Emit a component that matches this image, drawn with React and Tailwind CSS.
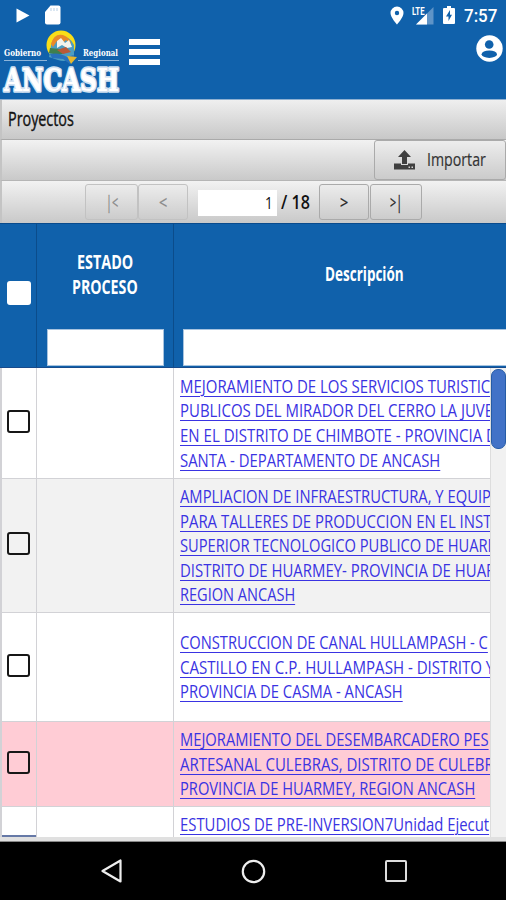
import React, { useLayoutEffect, useRef, useState } from 'react'

const rows = [
  {
    height: 'h-[111px]',
    bg: 'bg-white',
    lines: [
      ['MEJORAMIENTO DE LOS SERVICIOS TURISTIC', 310],
      ['PUBLICOS DEL MIRADOR DEL CERRO LA JUVE', 313],
      ['EN EL DISTRITO DE CHIMBOTE - PROVINCIA D', 317],
      ['SANTA - DEPARTAMENTO DE ANCASH', 260],
    ],
  },
  {
    height: 'h-[134px]',
    bg: 'bg-[#f2f2f2]',
    lines: [
      ['AMPLIACION DE INFRAESTRUCTURA, Y EQUIP', 311],
      ['PARA TALLERES DE PRODUCCION EN EL INST', 311],
      ['SUPERIOR TECNOLOGICO PUBLICO DE HUARM', 321],
      ['DISTRITO DE HUARMEY- PROVINCIA DE HUAR', 315],
      ['REGION ANCASH', 115],
    ],
  },
  {
    height: 'h-[109px]',
    bg: 'bg-white',
    lines: [
      ['CONSTRUCCION DE CANAL HULLAMPASH - C', 308],
      ['CASTILLO EN C.P. HULLAMPASH - DISTRITO Y', 314],
      ['PROVINCIA DE CASMA - ANCASH', 223],
    ],
  },
  {
    height: 'h-[85px]',
    bg: 'bg-[#ffccd5]',
    lines: [
      ['MEJORAMIENTO DEL DESEMBARCADERO PES', 309],
      ['ARTESANAL CULEBRAS, DISTRITO DE CULEBR', 314],
      ['PROVINCIA DE HUARMEY, REGION ANCASH', 295],
    ],
  },
]

// Condenses a line of text horizontally to the given width
const Narrow = ({ children, width, className = '' }) => {
  const ref = useRef(null)
  const [scale, setScale] = useState(1)

  useLayoutEffect(() => {
    setScale(width / ref.current.offsetWidth)
  }, [width, children])

  return (
    <span className="block shrink-0" style={{ width }}>
      <span
        ref={ref}
        className={`inline-block origin-left whitespace-nowrap align-top ${className}`}
        style={{ transform: `scaleX(${scale})` }}
      >
        {children}
      </span>
    </span>
  )
}

const Link = ({ text, width }) => (
  <a className="block h-[24.6px] text-[19px] leading-[24.6px] text-[#3a33e2]">
    <Narrow width={width} className="underline decoration-1 underline-offset-[3px]">{text}</Narrow>
  </a>
)

const StatusBar = () => (
  <div className="flex h-[30px] items-center justify-between pl-[16px] pr-[9px] text-white">
    <div className="flex items-center gap-[15px]">
      <svg className="h-[15px] w-[14px]" viewBox="0 0 14 15" fill="currentColor">
        <path d="M0.500 0.500L13.500 7.500L0.500 14.500Z" />
      </svg>
      <svg className="h-[20px] w-[16px]" viewBox="0 0 16 20" fill="currentColor">
        <path d="M5.500 0.500H13.500Q15.500 0.500 15.500 2.500V17.500Q15.500 19.500 13.500 19.500H2Q0 19.500 0 17.500V7Z" />
        <path d="M6 3V6M9 3V6M12 3V6" stroke="#c4d7ea" strokeWidth="1.200" />
      </svg>
    </div>
    <div className="flex items-center">
      <svg className="mr-[8px] h-[19px] w-[14px]" viewBox="0 0 14 19" fill="currentColor">
        <path fillRule="evenodd" d="M7 0.500A6.500 6.500 0 0 0 0.500 7C0.500 11.500 7 18.500 7 18.500S13.500 11.500 13.500 7A6.500 6.500 0 0 0 7 0.500ZM7 4.800A2.200 2.200 0 1 1 7 9.200A2.200 2.200 0 0 1 7 4.800Z" />
      </svg>
      <svg className="mr-[9px] h-[19px] w-[22px]" viewBox="0 0 22 19">
        <path d="M21.500 1V18.500H4Z" fill="#5f94c7" />
        <path d="M15 7.500V18.500H4Z" fill="#fff" />
        <text x="0" y="9" fill="#fff" fontFamily="Roboto, sans-serif" fontSize="10.500" fontWeight="700" textLength="12.500" lengthAdjust="spacingAndGlyphs">LTE</text>
      </svg>
      <svg className="mr-[9px] h-[18px] w-[12px]" viewBox="0 0 12 18" fill="currentColor">
        <path fillRule="evenodd" d="M4 0H8V2H11Q12 2 12 3V17Q12 18 11 18H1Q0 18 0 17V3Q0 2 1 2H4ZM7 4L3 10.500H5.500V15L9 8.700H7Z" />
      </svg>
      <Narrow width={33} className="pt-[2px] font-[Roboto,sans-serif] text-[18px] font-medium leading-[30px]">7:57</Narrow>
    </div>
  </div>
)

const Logo = () => (
  <svg className="h-[69px] w-[125px]" viewBox="0 0 125 69">
    <circle cx="61" cy="15" r="14.500" fill="#f9de18" />
    <path d="M51 16Q52 7 60 6Q70 6 74 15L74 26Q68 33 58 30L49 27Z" fill="#4c9dc2" />
    <path d="M51 14Q54 3 63 5Q71 8 71 15L66 10L62 14L57 11L53 17Z" fill="#e98928" />
    <path d="M57 11L61 8L65 13L69 10L72 17L67 18L62 15L57 18Z" fill="#f3f4ed" />
    <path d="M50 18L60 19L65 23L58 25L49 23Z" fill="#3e7f4e" />
    <path d="M57 20L66 17L71 22L63 24Z" fill="#b95938" />
    <path d="M50 24Q59 22 67 27L74 25L70 34L63 29L52 28Z" fill="#2871bc" />
    <path d="M67 26L77 27L71 34Z" fill="#e6b72d" />
    <g fill="#fff" fontFamily="'DejaVu Serif', serif" fontWeight="700">
      <text x="4" y="26" fontSize="9" textLength="37" lengthAdjust="spacingAndGlyphs">Gobierno</text>
      <text x="83" y="26" fontSize="9" textLength="35" lengthAdjust="spacingAndGlyphs">Regional</text>
      <text x="4" y="60.500" fontSize="32" stroke="#d3e1f1" strokeWidth="3.500" strokeLinejoin="round" paintOrder="stroke" textLength="115" lengthAdjust="spacingAndGlyphs">ANCASH</text>
    </g>
    <path d="M4 30.500H47M78 30.500H119" stroke="#8db4d9" strokeWidth="1" />
  </svg>
)

const PageButton = ({ label, width, labelWidth, disabled }) => (
  <button
    className={`flex h-[36px] shrink-0 items-center justify-center rounded-[3px] border bg-linear-to-b from-[#ececec] to-[#cccccc] text-[18px] ${disabled ? 'border-[#c2c2c2] text-[#888]' : 'border-[#aaaaaa] text-[#222]'}`}
    style={{ width }}
  >
    <Narrow width={labelWidth} className="[-webkit-text-stroke:0.3px_currentColor]">{label}</Narrow>
  </button>
)

const Checkbox = () => (
  <span className="block h-[23px] w-[23px] rounded-[3px] border-2 border-[#171717]" />
)

const App = () => {
  return (
    <div className="flex h-[900px] w-[506px] flex-col overflow-hidden bg-white font-['Open_Sans','Noto_Sans',sans-serif] text-[#111]">
      <header className="h-[100px] shrink-0 border-b border-[#8fb0d1] bg-[#1061ab]">
        <StatusBar />
        <div className="flex h-[69px] items-start text-white">
          <Logo />
          <div className="ml-[4px] mt-[9px] flex w-[31px] flex-col gap-[4px]">
            <span className="h-[6px] bg-white" />
            <span className="h-[6px] bg-white" />
            <span className="h-[6px] bg-white" />
          </div>
          <svg className="ml-auto mr-[3px] mt-[5px] h-[27px] w-[27px]" viewBox="0 0 27 27">
            <circle cx="13.500" cy="13.500" r="13.200" fill="#fff" />
            <circle cx="13.200" cy="9.500" r="4.300" fill="#1061ab" />
            <ellipse cx="13.300" cy="19.200" rx="7.700" ry="3.700" fill="#1061ab" />
          </svg>
        </div>
      </header>

      <div className="flex h-[40px] shrink-0 items-center border-b border-l-2 border-b-[#aaaaaa] border-l-[#c4c4c4] bg-linear-to-b from-[#efefef] to-[#c8c8c8] pl-[6px] pb-[2px]">
        <Narrow width={66} className="text-[20px] [-webkit-text-stroke:0.4px_#111]">Proyectos</Narrow>
      </div>

      <div className="flex h-[41px] shrink-0 justify-end border-b border-l-2 border-b-[#b5b5b5] border-l-[#c4c4c4] bg-linear-to-b from-[#f2f2f2] to-[#c9c9c9]">
        <button className="flex h-[40px] w-[132px] items-center rounded-[3px] border border-[#aaaaaa] bg-linear-to-b from-[#ededed] to-[#cbcbcb] pl-[19px] text-[#333]">
          <svg className="h-[20px] w-[21px]" viewBox="0 0 21 20" fill="#404040">
            <path d="M10.500 0L17 7H13V14H8V7H4Z" />
            <path fillRule="evenodd" d="M0 13.500H7V15H14V13.500H21V19.500H0ZM14.500 16.500V18H16V16.500ZM17.500 16.500V18H19V16.500Z" />
          </svg>
          <span className="ml-[12px] pb-[2px]">
            <Narrow width={59} className="text-[19px] [-webkit-text-stroke:0.2px_#333]">Importar</Narrow>
          </span>
        </button>
      </div>

      <div className="flex h-[42px] shrink-0 items-center border-l-2 border-[#c4c4c4] bg-linear-to-b from-[#f2f2f2] to-[#c9c9c9] pl-[83px]">
        <PageButton label="|<" width={53} labelWidth={12} disabled />
        <PageButton label="<" width={50} labelWidth={8} disabled />
        <div className="ml-[10px] mt-[2px] flex h-[26px] w-[79px] items-center justify-end bg-white pr-[4px]">
          <Narrow width={8} className="text-[17px]">1</Narrow>
        </div>
        <span className="ml-[4px] mr-[9px]">
          <Narrow width={29} className="text-[20px] font-semibold">/ 18</Narrow>
        </span>
        <PageButton label=">" width={50} labelWidth={8} />
        <span className="w-[1px]" />
        <PageButton label=">|" width={52} labelWidth={12} />
      </div>

      <div className="flex h-[145px] shrink-0 border-y border-t-[#094b8d] border-b-[#184b8c] bg-[#1061ab] text-white">
        <div className="flex w-[37px] shrink-0 items-center border-r border-[#0b4c8b] pl-[7px]">
          <span className="mb-[5px] h-[24px] w-[24px] rounded-[3px] bg-white" />
        </div>
        <div className="flex w-[137px] shrink-0 flex-col items-center border-r border-[#0b4c8b] pt-[25px] text-[20px] font-bold leading-[25px]">
          <Narrow width={56}>ESTADO</Narrow>
          <Narrow width={66}>PROCESO</Narrow>
          <div className="mt-auto mb-[1px] h-[37px] w-[117px] border border-[#a7c3df] bg-white" />
        </div>
        <div className="flex flex-1 flex-col pt-[37px] text-[20px] font-bold leading-[25px]">
          <span className="ml-[151px]">
            <Narrow width={79}>Descripción</Narrow>
          </span>
          <div className="mt-auto mb-[1px] ml-[9px] h-[37px] border border-r-0 border-[#a7c3df] bg-white" />
        </div>
      </div>

      <div className="flex h-[469px] shrink-0">
        <div className="w-[490px] shrink-0 overflow-hidden">
          {rows.map((row, index) => (
            <div key={index} className={`flex border-b border-[#d2d2d6] ${row.height} ${row.bg}`}>
              <div className="flex w-[37px] shrink-0 items-center border-r border-l-2 border-[#d2d2d6] pl-[5px]">
                <div className="mb-[4px]">
                  <Checkbox />
                </div>
              </div>
              <div className="w-[137px] shrink-0 border-r border-[#d2d2d6]" />
              <div className="flex min-w-0 flex-1 flex-col justify-center overflow-hidden pl-[6px]">
                {row.lines.map(([text, width]) => (
                  <Link key={text} text={text} width={width} />
                ))}
              </div>
            </div>
          ))}
          <div className="flex h-[30px] bg-white">
            <div className="flex w-[37px] shrink-0 items-end border-r border-l-2 border-[#d2d2d6]">
              <span className="h-[2px] w-full bg-[#6679a7]" />
            </div>
            <div className="w-[137px] shrink-0 border-r border-[#d2d2d6]" />
            <div className="flex-1 overflow-hidden pl-[6px] pt-[5px]">
              <Link text="ESTUDIOS DE PRE-INVERSION7Unidad Ejecut" width={309} />
            </div>
          </div>
        </div>
        <div className="flex-1 border-l border-[#dddddd] bg-[#f1f1f1]">
          <div className="mt-[1px] h-[80px] w-[15px] rounded-[7px] border border-[#265ca6] bg-[#4272c7]" />
        </div>
      </div>

      <div className="h-[5px] shrink-0 border-b border-[#888] bg-[#e0e0e0]" />

      <nav className="flex flex-1 bg-black">
        <svg className="ml-[100px] mt-[17px] h-[25px] w-[23px]" viewBox="0 0 23 25" fill="none" stroke="#eee" strokeWidth="2.200" strokeLinejoin="round">
          <path d="M20.500 1.500V22.500L2.500 12Z" />
        </svg>
        <svg className="ml-[118px] mt-[17px] h-[25px] w-[25px]" viewBox="0 0 25 25" fill="none" stroke="#eee" strokeWidth="2.200">
          <circle cx="12.500" cy="12.500" r="10.700" />
        </svg>
        <span className="ml-[119px] mt-[18px] h-[22px] w-[22px] rounded-[2px] border-[2.500px] border-[#ddd]" />
      </nav>
    </div>
  )
}

export default App
